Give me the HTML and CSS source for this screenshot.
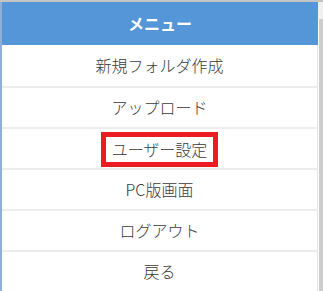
FILE: index.html
```html
<!DOCTYPE html>
<html>
<head>
<meta charset="UTF-8">
<title>メニュー</title>
<link rel="stylesheet" href="styles.css">
</head>
<body>
  <div class="frame">
    <div class="panel">
      <div class="menu-title">メニュー</div>
      <ul class="menu">
        <li class="menu-item">新規フォルダ作成</li>
        <li class="menu-item">アップロード</li>
        <li class="menu-item"><span class="mark">ユーザー設定</span></li>
        <li class="menu-item">PC版画面</li>
        <li class="menu-item">ログアウト</li>
        <li class="menu-item">戻る</li>
      </ul>
    </div>
    <div class="scroll">
      <div class="scroll-top"></div>
      <div class="scroll-thumb"></div>
    </div>
  </div>
</body>
</html>
```

FILE: styles.css
```css
html, body {
  margin: 0;
  padding: 0;
  background: #ffffff;
}
body {
  font-family: "Noto Sans CJK JP", "Liberation Sans", sans-serif;
  font-size: 16px;
  color: #333333;
  overflow: hidden;
}
.frame {
  display: flex;
  height: 289px;
  border-top: 2px solid #c4c4c4;
  overflow: hidden;
}
.panel {
  flex: 1;
  border-left: 2px solid #8fb0d6;
  background: #ececec;
}
.menu-title {
  height: 43px;
  line-height: 43px;
  background: #5596d9;
  color: #ffffff;
  font-weight: bold;
  text-align: center;
}
.menu {
  list-style: none;
  margin: 0;
  padding: 0;
}
.menu-item {
  height: 39px;
  line-height: 39px;
  margin-bottom: 2px;
  background: #ffffff;
  border-right: 1px solid #e4e4e4;
  text-align: center;
  font-weight: 300;
  color: #3a3a3a;
}
.menu-item:first-child {
  height: 41px;
  line-height: 41px;
}
.mark {
  display: inline-block;
  box-sizing: border-box;
  width: 117px;
  height: 35px;
  line-height: 25px;
  border: 5px solid #ec1c24;
  vertical-align: middle;
  margin-top: -3px;
}
.scroll {
  width: 5px;
  display: flex;
  flex-direction: column;
  background: #ffffff;
}
.scroll-top {
  height: 17px;
  background: #f0f0f0;
}
.scroll-thumb {
  flex: 1;
  margin-left: 1px;
  background: #cdcdcd;
}
```
